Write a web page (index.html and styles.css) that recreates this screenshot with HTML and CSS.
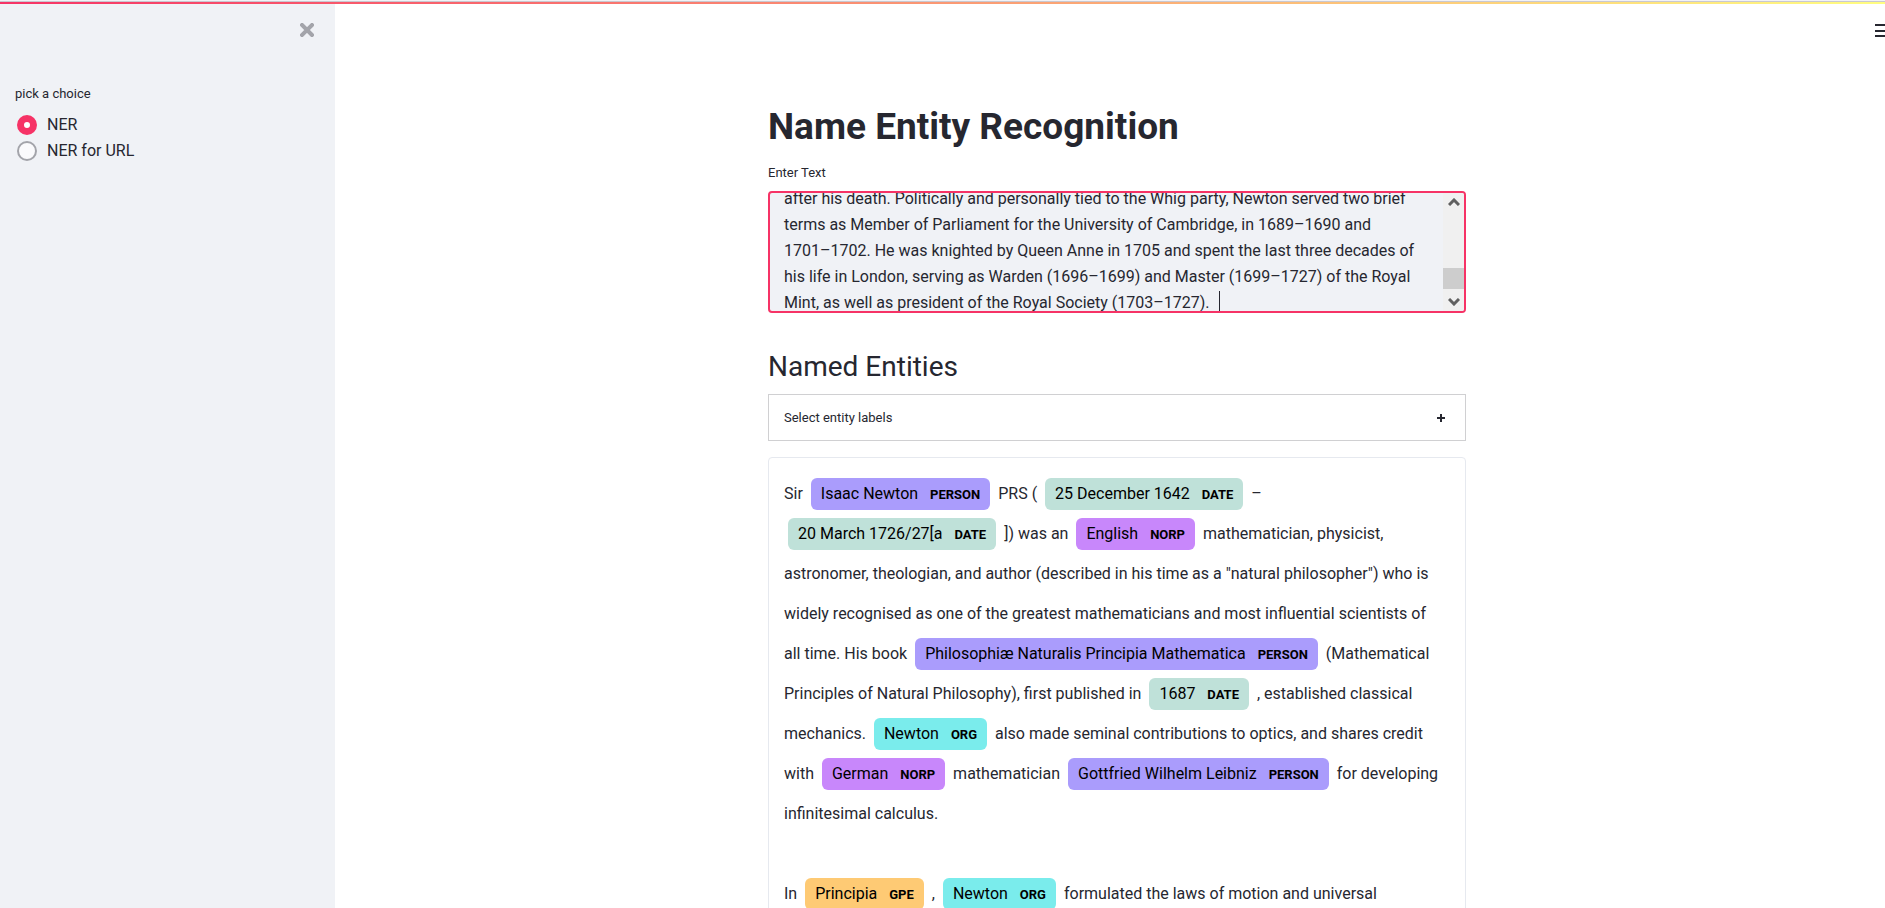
FILE: index.html
```html
<!DOCTYPE html>
<html lang="en">
<head>
<meta charset="utf-8">
<title>Name Entity Recognition</title>
<link rel="stylesheet" href="styles.css">
</head>
<body>
<div class="decoration"></div>
<div class="app">
  <aside class="sidebar">
    <button class="close" type="button" aria-label="Close sidebar">
      <svg width="14" height="14" viewBox="0 0 14 14"><path d="M2 2L12 12M12 2L2 12" stroke="#a3a4aa" stroke-width="4" stroke-linecap="square" fill="none"/></svg>
    </button>
    <fieldset class="choices">
      <legend class="caption">pick a choice</legend>
      <label class="choice"><input class="radio" type="radio" name="mode" checked>NER</label>
      <label class="choice"><input class="radio" type="radio" name="mode">NER for URL</label>
    </fieldset>
  </aside>
  <main class="main">
    <button class="menu" type="button" aria-label="Main menu">
      <svg width="24" height="16" viewBox="0 0 24 16"><path d="M0 2h24M0 8h24M0 13h24" stroke="#262730" stroke-width="2"/></svg>
    </button>
    <div class="block">
      <h1 class="title">Name Entity Recognition</h1>
      <label class="caption" for="source">Enter Text</label>
      <div class="editor">
        <textarea class="source" id="source" spellcheck="false">after his death. Politically and personally tied to the Whig party, Newton served two brief
terms as Member of Parliament for the University of Cambridge, in 1689–1690 and
1701–1702. He was knighted by Queen Anne in 1705 and spent the last three decades of
his life in London, serving as Warden (1696–1699) and Master (1699–1727) of the Royal
Mint, as well as president of the Royal Society (1703–1727). </textarea>
        <span class="caret"></span>
        <div class="scrollbar" aria-hidden="true">
          <svg width="12" height="8" viewBox="0 0 12 8"><path d="M1 7L6 2L11 7" stroke="#606060" stroke-width="3" fill="none"/></svg>
          <span class="thumb"></span>
          <svg width="12" height="8" viewBox="0 0 12 8"><path d="M1 1L6 6L11 1" stroke="#606060" stroke-width="3" fill="none"/></svg>
        </div>
      </div>
      <h2 class="subtitle">Named Entities</h2>
      <button class="expander" type="button" aria-expanded="false">
        <span>Select entity labels</span>
        <svg width="10" height="10" viewBox="0 0 10 10"><path d="M5 1v8M1 5h8" stroke="#262730" stroke-width="2"/></svg>
      </button>
      <div class="entities">
        Sir <mark class="entity person">Isaac Newton <b class="tag">PERSON</b></mark> PRS ( <mark class="entity date">25 December 1642 <b class="tag">DATE</b></mark> –<br>
        <mark class="entity date">20 March 1726/27[a <b class="tag">DATE</b></mark> ]) was an <mark class="entity norp">English <b class="tag">NORP</b></mark> mathematician, physicist,<br>
        astronomer, theologian, and author (described in his time as a "natural philosopher") who is<br>
        widely recognised as one of the greatest mathematicians and most influential scientists of<br>
        all time. His book <mark class="entity person">Philosophiæ Naturalis Principia Mathematica <b class="tag">PERSON</b></mark> (Mathematical<br>
        Principles of Natural Philosophy), first published in <mark class="entity date">1687 <b class="tag">DATE</b></mark> , established classical<br>
        mechanics. <mark class="entity org">Newton <b class="tag">ORG</b></mark> also made seminal contributions to optics, and shares credit<br>
        with <mark class="entity norp">German <b class="tag">NORP</b></mark> mathematician <mark class="entity person">Gottfried Wilhelm Leibniz <b class="tag">PERSON</b></mark> for developing<br>
        infinitesimal calculus.<br>
        <br>
        In <mark class="entity gpe">Principia <b class="tag">GPE</b></mark> , <mark class="entity org">Newton <b class="tag">ORG</b></mark> formulated the laws of motion and universal
      </div>
    </div>
  </main>
</div>
<script src="main.js"></script>
</body>
</html>
```
FILE: styles.css
```css
* { box-sizing: border-box; }

body {
  margin: 0;
  height: 100vh;
  overflow: hidden;
  display: flex;
  flex-direction: column;
  background: #fff;
  color: #262730;
  font: 16px/26px Roboto, "Liberation Sans", sans-serif;
}

button {
  font: inherit;
  color: inherit;
  background: none;
  border: 0;
  padding: 0;
}

svg { display: block; flex: none; }

.decoration {
  height: 4px;
  flex: none;
  border-top: 1px solid #f2f2f6;
  background: linear-gradient(#c9c8d0, #c9c8d0) top / 100% 1px no-repeat,
    linear-gradient(90deg, #f63366, #fffd80);
}

.app { display: flex; flex: 1; min-height: 0; }

.sidebar {
  width: 335px;
  flex: none;
  background: #f0f2f6;
  padding: 19px 15px;
}

.close { display: block; margin: 0 6px 0 auto; }

.choices { border: 0; margin: 47px 0 0; padding: 0; }

.caption { display: block; padding: 0; font-size: 13px; line-height: 20px; }

.choices .caption { margin-bottom: 8px; }

.choice { display: flex; align-items: center; gap: 10px; padding-left: 2px; }

.radio {
  appearance: none;
  width: 20px;
  height: 20px;
  margin: 0;
  border: 2px solid #a3a4aa;
  border-radius: 50%;
  background: #fafafc;
}

.radio:checked { border: 7px solid #f63366; background: #fff; }

.main { flex: 1; position: relative; margin-right: -14px; }

.menu { position: absolute; top: 19px; right: 0; }

.block {
  max-width: 730px;
  margin: 0 auto;
  padding: 101px 16px 0;
}

.title { margin: 0 0 14px; font-size: 37px; line-height: 44px; font-weight: 700; }

.editor {
  position: relative;
  display: flex;
  height: 122px;
  margin-top: 8px;
  border: 2px solid #f63366;
  border-radius: 4px;
  background: #f0f2f6;
  overflow: hidden;
}

.source {
  flex: 1;
  min-width: 0;
  border: 0;
  outline: 0;
  padding: 0 14px;
  resize: none;
  overflow: hidden;
  white-space: pre;
  background: none;
  color: inherit;
  font: inherit;
}

.caret {
  position: absolute;
  left: 449px;
  bottom: 0;
  width: 1px;
  height: 20px;
  background: #262730;
}

.scrollbar {
  width: 21px;
  padding: 5px 0;
  display: flex;
  flex-direction: column;
  align-items: center;
  background: #f0f0f0;
}

.thumb { width: 100%; height: 21px; margin: auto 0 9px; background: #cdcdcd; }

.subtitle { margin: 36px 0 10px; font-size: 28px; line-height: 35px; font-weight: 400; }

.expander {
  width: 100%;
  height: 47px;
  padding: 0 19px 0 15px;
  display: flex;
  align-items: center;
  justify-content: space-between;
  border: 1px solid #d0d0d2;
  font-size: 13px;
}

.entities {
  margin-top: 16px;
  padding: 16px 14px 16px 15px;
  border: 1px solid #e6e9ef;
  border-radius: 4px;
  line-height: 40px;
}

.entity {
  display: inline-block;
  margin: 0 4px;
  padding: 8px 10px 7px;
  border-radius: 6px;
  color: #000;
  line-height: 16px;
}

.tag { margin-left: 8px; font-size: 13px; font-weight: 700; }

.person { background: #aa9cfc; }
.date { background: #bfe1d9; }
.norp { background: #c887fb; }
.org { background: #7aecec; }
.gpe { background: #feca74; }
```
FILE: main.js
```js
document.getElementById('source').scrollTop = 7;
```
